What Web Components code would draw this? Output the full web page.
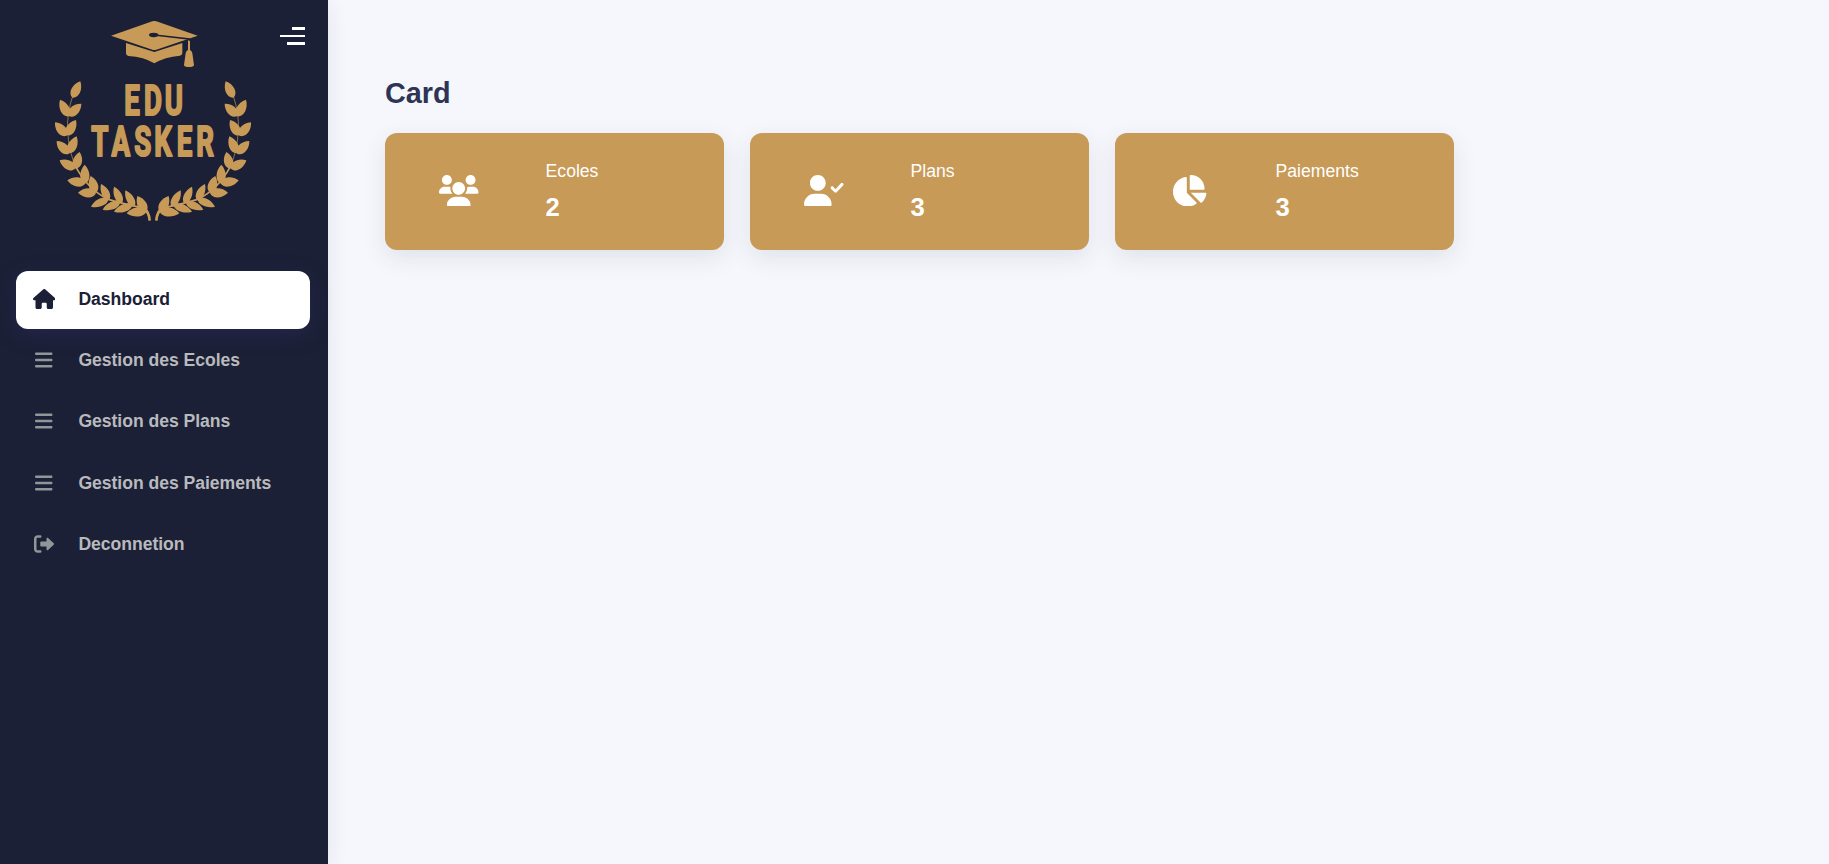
<!DOCTYPE html>
<html lang="fr">
<head>
<meta charset="utf-8">
<title>Edu Tasker</title>
<style>
html,body{margin:0;height:100%}
body{font-family:"Liberation Sans",Arial,sans-serif;background:#f5f7fc;overflow:hidden}
</style>
</head>
<body>
<edu-app></edu-app>
<script>
const ICONS={
house:[576,"M575.8 255.5C575.8 273.5 560.8 287.6 543.8 287.6H511.8L512.5 447.7C512.5 450.5 512.3 453.1 512 455.8V472C512 494.1 494.1 512 472 512H456C454.9 512 453.8 511.1 452.7 511.9C451.3 511.1 449.9 512 448.5 512H392C369.9 512 352 494.1 352 472V384C352 366.3 337.7 352 320 352H256C238.3 352 224 366.3 224 384V472C224 494.1 206.1 512 184 512H128.1C126.6 512 125.1 511.9 123.6 511.8C122.4 511.9 121.2 512 120 512H104C81.91 512 64 494.1 64 472V360C64 359.1 64.03 358.1 64.09 357.2V287.6H32.05C14.02 287.6 0 273.5 0 255.5C0 246.5 3.004 238.5 10.01 231.5L266.4 8.016C273.4 1.002 281.4 0 288.4 0C295.4 0 303.4 2.004 309.5 7.014L564.8 231.5C572.8 238.5 576.9 246.5 575.8 255.5L575.8 255.5z"],
bars:[448,"M0 96C0 78.33 14.33 64 32 64H416C433.7 64 448 78.33 448 96C448 113.7 433.7 128 416 128H32C14.33 128 0 113.7 0 96zM0 256C0 238.3 14.33 224 32 224H416C433.7 224 448 238.3 448 256C448 273.7 433.7 288 416 288H32C14.33 288 0 273.7 0 256zM416 448H32C14.33 448 0 433.7 0 416C0 398.3 14.33 384 32 384H416C433.7 384 448 398.3 448 416C448 433.7 433.7 448 416 448z"],
exit:[512,"M96 480h64C177.7 480 192 465.7 192 448S177.7 416 160 416H96c-17.67 0-32-14.33-32-32V128c0-17.67 14.33-32 32-32h64C177.7 96 192 81.67 192 64S177.7 32 160 32H96C42.98 32 0 74.98 0 128v256C0 437 42.98 480 96 480zM504.8 238.5l-144.1-136c-6.975-6.578-17.2-8.375-26-4.594c-8.803 3.797-14.51 12.47-14.51 22.05l-.0918 72l-128-.001c-17.69 0-32.02 14.33-32.02 32v64c0 17.67 14.34 32 32.02 32l128 .001l.0918 71.1c0 9.578 5.707 18.25 14.51 22.05c8.803 3.781 19.03 1.984 26-4.594l144.1-136C514.4 264.4 514.4 247.6 504.8 238.5z"],
users:[640,"M319.9 320c57.41 0 103.1-46.56 103.1-104c0-57.44-46.54-104-103.1-104c-57.41 0-103.1 46.56-103.1 104C215.9 273.4 262.5 320 319.9 320zM369.9 352H270.1C191.6 352 128 411.7 128 485.3C128 500.1 140.7 512 156.4 512h327.2C499.3 512 512 500.1 512 485.3C512 411.7 448.4 352 369.9 352zM512 160c44.18 0 80-35.82 80-80S556.2 0 512 0c-44.18 0-80 35.82-80 80S467.8 160 512 160zM183.9 216c0-5.449 .9824-10.63 1.609-15.91C174.6 194.1 162.6 192 149.9 192H88.08C39.44 192 0 233.8 0 285.3C0 295.6 7.887 304 17.62 304h199.5C196.7 280.2 183.9 249.7 183.9 216zM128 160c44.18 0 80-35.82 80-80S172.2 0 128 0C83.82 0 48 35.82 48 80S83.82 160 128 160zM551.9 192h-61.84c-12.8 0-24.88 3.037-35.86 8.24C454.8 205.5 455.8 210.6 455.8 216c0 33.71-12.78 64.21-33.16 88h199.7C632.1 304 640 295.6 640 285.3C640 233.8 600.6 192 551.9 192z"],
check:[640,"M274.7 304H173.3C77.61 304 0 381.6 0 477.3C0 496.5 15.52 512 34.66 512h378.7C432.5 512 448 496.5 448 477.3C448 381.6 370.4 304 274.7 304zM224 256c70.7 0 128-57.31 128-128S294.7 0 224 0C153.3 0 96 57.31 96 128S153.3 256 224 256zM632.3 134.4c-9.703-9-24.91-8.453-33.92 1.266l-87.05 93.75l-38.39-38.39c-9.375-9.375-24.56-9.375-33.94 0s-9.375 24.56 0 33.94l56 56C499.5 285.5 505.6 288 512 288h.4375c6.531-.125 12.72-2.891 17.16-7.672l104-112C642.6 158.6 642 143.4 632.3 134.4z"],
pie:[576,"M304 16.58C304 7.555 310.1 0 320 0C443.7 0 544 100.3 544 224C544 233 536.4 240 527.4 240H304V16.58zM32 272C32 150.7 122.1 50.25 239 34.25C248.2 32.99 256 40.36 256 49.61V288L412.5 444.5C419.2 451.2 418.7 462.2 411 467.7C371.8 495.6 323.8 512 272 512C139.5 512 32 404.6 32 272zM558.4 288C567.6 288 575 295.8 573.8 305C566.1 360.9 539.1 410.6 499.9 447.3C493.9 452.1 484.5 452.5 478.7 446.7L320 288H558.4z"]
};
const define=(name,render)=>customElements.define(name,class extends HTMLElement{
  constructor(){super();this.attachShadow({mode:"open"})}
  connectedCallback(){this.shadowRoot.innerHTML=render(this)}
});

define("edu-icon",el=>{
  const [w,d]=ICONS[el.getAttribute("name")],s=+el.getAttribute("size");
  return `<style>:host{display:block;line-height:0}svg{display:block;fill:currentColor}</style>
  <svg width="${w*s/512}" height="${s}" viewBox="0 0 ${w} 512"><path d="${d}"/></svg>`;
});

// Each leaf: base x, base y, tip x, tip y.
const LEAVES=[
[97,263,121,214],
[86,319,60,269],[86,318,124,281],
[80,377,45,337],[80,376,108,330],
[87,431,50,393],[87,430,110,379],
[105,476,59,451],[107,476,119,426],
[136,520,82,511],[135,521,134,464],
[168,549,114,548],[167,549,152,498],
[205,567,153,590],[207,570,183,522],
[240,577,188,599],[245,580,222,530],
[277,585,222,605],[283,590,256,541],
[320,602,260,610],[318,606,292,558]];
const leaf=([bx,by,tx,ty],i)=>{
  const w=i>12&&i<19?15.5:18.5;
  const dx=tx-bx,dy=ty-by,l=Math.hypot(dx,dy),nx=-dy/l*w,ny=dx/l*w;
  const p=(t,s)=>`${(bx+dx*t+nx*s).toFixed(1)} ${(by+dy*t+ny*s).toFixed(1)}`;
  return `M${bx} ${by}C${p(.12,1)} ${p(.66,1)} ${tx} ${ty}C${p(.66,-1)} ${p(.12,-1)} ${bx} ${by}z`;
};
define("edu-logo",()=>{
  const branch=`<path d="${LEAVES.map(leaf).join("")}"/>
   <path d="M99 255Q80 310 83 362Q86 430 112 480" fill="none" stroke="#c89a58" stroke-width="2.5" opacity=".8"/>
   <path d="M107 470Q145 540 205 568Q260 584 303 592Q325 602 329 632" fill="none" stroke="#c89a58" stroke-width="5"/>
   <path d="M312 596Q327 605 329 631" fill="none" stroke="#c89a58" stroke-width="8"/>`;
  return `<style>:host{display:block}svg{display:block}text{font:700 127.5px Roboto,"Liberation Sans",sans-serif;vector-effect:non-scaling-stroke}</style>
  <svg width="204" height="208" viewBox="36 18 612 624" fill="#c89a58">
   <path d="M213 77L337 34Q343 32 349 34L473 77L349 119Q343 121 337 119z"/>
   <path d="M258 99L343 126L427 99V129Q427 136 420 137Q374 141 343 160Q312 141 265 138Q258 137 258 130z"/>
   <path d="M343 75L447 87V98" fill="none" stroke="#1b2036" stroke-width="5"/><ellipse cx="341" cy="75" rx="14" ry="6.5" fill="#1b2036"/>
   <path d="M444 91L450 93V120Q456 122 457 130L462 165Q461 171 447 171Q433 171 432 165L437 130Q438 122 444 120z"/>
   <g>${branch}</g><g transform="translate(678 0) scale(-1 1)">${branch}</g>
   <g stroke="#c89a58" stroke-width="1.8" stroke-linejoin="round">
    <text transform="translate(0 315.5) scale(.65 1)" x="388.4 479.9 575.6">EDU</text>
    <text transform="translate(0 437.8) scale(.65 1)" x="237.1 329.6 434.5 527.4 631.4 721">TASKER</text>
   </g>
  </svg>`;
});

define("menu-toggle",()=>`<style>:host{display:flex;flex-direction:column;align-items:flex-end;width:25px;gap:5px}
 i{display:block;background:#fff;height:3px}i:nth-of-type(1){width:13px}i:nth-of-type(2){width:25px;height:2px}i:nth-of-type(3){width:18px}</style><i></i><i></i><i></i>`);

define("nav-item",el=>`<style>
:host{display:flex;align-items:center;height:58px;border-radius:12px;color:#b9babd;font-size:17.6px;font-weight:700;letter-spacing:-.04px}
:host([active]){background:#fff;color:#1b2036;box-shadow:0 5px 20px rgba(49,46,110,.4)}
.i{width:56px;display:flex;justify-content:center;color:#8f9799;padding-bottom:2px;margin-right:6.4px}
:host([active]) .i{color:#1b2036}
span{line-height:20px;padding-bottom:2px}
</style><div class="i"><edu-icon name="${el.getAttribute("icon")}" size="20"></edu-icon></div><span><slot></slot></span>`);

define("side-bar",()=>`<style>
:host{display:flex;flex-direction:column;box-sizing:border-box;width:328px;flex:none;background:#1b2036;padding:16px 18px 0 16px;box-shadow:0 5px 20px rgba(40,45,80,.09)}
header{display:flex;justify-content:space-between;align-items:flex-start;height:255px;padding:0 5px 0 36px;box-sizing:border-box}
menu-toggle{margin-top:11px}
nav{display:flex;flex-direction:column;gap:3.2px}
</style><header><edu-logo></edu-logo><menu-toggle></menu-toggle></header>
<nav><nav-item icon="house" active>Dashboard</nav-item><nav-item icon="bars">Gestion des Ecoles</nav-item><nav-item icon="bars">Gestion des Plans</nav-item><nav-item icon="bars">Gestion des Paiements</nav-item><nav-item icon="exit">Deconnetion</nav-item></nav>`);

define("stat-card",el=>`<style>
:host{display:flex;box-sizing:border-box;width:339px;height:117px;border-radius:12px;background:#c89a58;color:#fff;box-shadow:0 8px 24px rgba(50,50,80,.1)}
.i{width:148px;display:flex;align-items:center;justify-content:center;padding:0 0 2px;margin-right:12.6px;box-sizing:border-box}
.t{padding-top:24px}
.l{font-size:17.6px;line-height:28px}.v{font-size:25.6px;font-weight:700;line-height:44px}
</style><div class="i"><edu-icon name="${el.getAttribute("icon")}" size="31.6"></edu-icon></div>
<div class="t"><div class="l"><slot></slot></div><div class="v"><slot name="value"></slot></div></div>`);

define("edu-app",()=>`<style>
:host{display:flex;height:100vh}
main{flex:1;padding:73px 0 0 57px}
h1{margin:0 0 20px;font-size:28.8px;line-height:40px;color:#2d3454}
section{display:flex;gap:26px}
</style><side-bar></side-bar><main><h1>Card</h1><section>
<stat-card icon="users">Ecoles<span slot="value">2</span></stat-card>
<stat-card icon="check">Plans<span slot="value">3</span></stat-card>
<stat-card icon="pie">Paiements<span slot="value">3</span></stat-card></section></main>`);
</script>
</body>
</html>
